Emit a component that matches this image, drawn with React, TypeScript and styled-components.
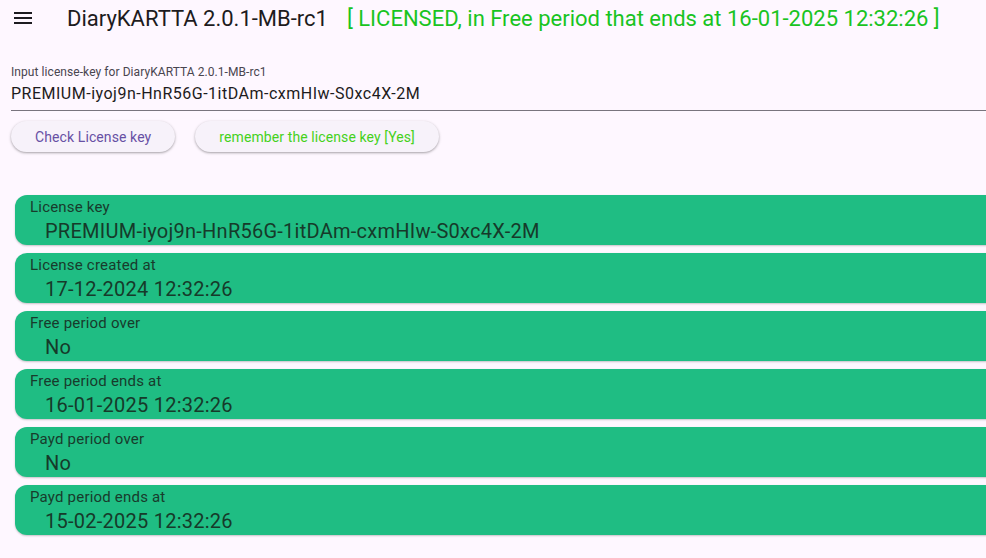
import React from "react";
import styled, { createGlobalStyle } from "styled-components";

const Global = createGlobalStyle`
  html, body { margin: 0; padding: 0; background: #fef7ff; overflow: hidden; }
  body { font-family: Roboto, "Noto Sans", sans-serif; color: #1d1b20; }
`;

const Page = styled.div`
  width: 986px;
  height: 558px;
  background: #fef7ff;
  overflow: hidden;
  display: flex;
  flex-direction: column;
`;

const AppBar = styled.header`
  height: 36px;
  display: flex;
  align-items: center;
  white-space: nowrap;
`;

const MenuButton = styled.div`
  width: 24px;
  height: 24px;
  margin-left: 11px;
  display: flex;
  align-items: center;
  justify-content: center;
`;

const Title = styled.h1`
  margin: 0 0 0 32px;
  font-size: 22px;
  font-weight: 400;
  color: #1d1b20;
  letter-spacing: 0;
`;

const Status = styled.span`
  margin-left: 19px;
  font-size: 22px;
  font-weight: 400;
  color: #19c41f;
`;

const Form = styled.section`
  padding: 28px 0 0 11px;
  display: flex;
  flex-direction: column;
`;

const FieldLabel = styled.label`
  font-size: 12px;
  color: #49454f;
  line-height: 16px;
  letter-spacing: 0.07px;
`;

const FieldInput = styled.div`
  margin-top: 2px;
  font-size: 16px;
  line-height: 24px;
  letter-spacing: 0.5px;
  color: #1d1b20;
  padding-bottom: 4px;
  border-bottom: 1px solid #79747e;
`;

const ButtonRow = styled.div`
  display: flex;
  gap: 20px;
  margin-top: 10px;
`;

const PillButton = styled.button<{ $color: string }>`
  height: 31px;
  padding: 0 24px;
  border: none;
  border-radius: 16px;
  background: #f7f2fa;
  box-shadow: 0 1px 2px rgba(0, 0, 0, 0.25), 0 1px 3px 1px rgba(0, 0, 0, 0.08);
  color: ${(p) => p.$color};
  font-family: Roboto, sans-serif;
  font-size: 14px;
  font-weight: 400;
  letter-spacing: 0.1px;
`;

const CardList = styled.section`
  margin-top: 43px;
  padding-left: 15px;
  display: flex;
  flex-direction: column;
  gap: 8px;
`;

const Card = styled.div`
  width: 1000px;
  height: 50px;
  box-sizing: border-box;
  background: #1fbd83;
  border-radius: 12px;
  box-shadow: 0 1px 2px rgba(0, 0, 0, 0.22);
  padding: 2px 0 0 15px;
  display: flex;
  flex-direction: column;
`;

const CardLabel = styled.div`
  font-size: 15px;
  line-height: 20px;
  letter-spacing: 0.2px;
  color: #183b2c;
`;

const CardValue = styled.div`
  margin: 2px 0 0 15px;
  font-size: 20px;
  line-height: 24px;
  letter-spacing: 0.25px;
  color: #163a2a;
`;

const rows = [
  ["License key", "PREMIUM-iyoj9n-HnR56G-1itDAm-cxmHIw-S0xc4X-2M"],
  ["License created at", "17-12-2024 12:32:26"],
  ["Free period over", "No"],
  ["Free period ends at", "16-01-2025 12:32:26"],
  ["Payd period over", "No"],
  ["Payd period ends at", "15-02-2025 12:32:26"],
];

export default function App() {
  return (
    <Page>
      <Global />
      <AppBar>
        <MenuButton>
          <svg width="24" height="24" viewBox="0 0 24 24">
            <path d="M3 18h18v-2H3v2zm0-5h18v-2H3v2zm0-7v2h18V6H3z" fill="#1d1b20" />
          </svg>
        </MenuButton>
        <Title>DiaryKARTTA 2.0.1-MB-rc1</Title>
        <Status>[ LICENSED, in Free period that ends at 16-01-2025 12:32:26 ]</Status>
      </AppBar>
      <Form>
        <FieldLabel>Input license-key for DiaryKARTTA 2.0.1-MB-rc1</FieldLabel>
        <FieldInput>PREMIUM-iyoj9n-HnR56G-1itDAm-cxmHIw-S0xc4X-2M</FieldInput>
        <ButtonRow>
          <PillButton $color="#6750a4">Check License key</PillButton>
          <PillButton $color="#45d11c">remember the license key [Yes]</PillButton>
        </ButtonRow>
      </Form>
      <CardList>
        {rows.map(([label, value]) => (
          <Card key={label}>
            <CardLabel>{label}</CardLabel>
            <CardValue>{value}</CardValue>
          </Card>
        ))}
      </CardList>
    </Page>
  );
}
